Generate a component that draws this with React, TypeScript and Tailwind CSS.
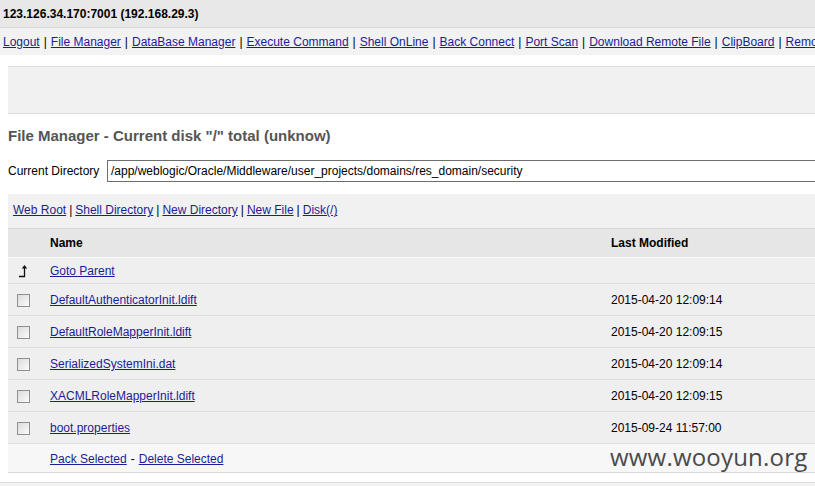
import React from "react";

const navLinks = [
  "Logout",
  "File Manager",
  "DataBase Manager",
  "Execute Command",
  "Shell OnLine",
  "Back Connect",
  "Port Scan",
  "Download Remote File",
  "ClipBoard",
  "Remote Control",
  "Port Map",
  "JSP Env",
  "Eval Java Code",
];

const toolLinks = ["Web Root", "Shell Directory", "New Directory", "New File", "Disk(/)"];

const files = [
  ["DefaultAuthenticatorInit.ldift", "2015-04-20 12:09:14"],
  ["DefaultRoleMapperInit.ldift", "2015-04-20 12:09:15"],
  ["SerializedSystemIni.dat", "2015-04-20 12:09:14"],
  ["XACMLRoleMapperInit.ldift", "2015-04-20 12:09:15"],
  ["boot.properties", "2015-09-24 11:57:00"],
];

function Box() {
  return (
    <span className="block w-[13px] h-[13px] border border-[#8f8f8f] bg-gradient-to-br from-[#dcdcdc] to-[#fafafa]" />
  );
}

export default function App() {
  return (
    <div
      className="w-full h-screen overflow-hidden bg-white text-[12px] text-black relative"
      style={{ fontFamily: '"Liberation Sans", Arial, sans-serif' }}
    >
      <div className="h-[28px] bg-[#e8e8e8] border-b border-[#d8d8d8] flex items-center px-[3px] font-bold whitespace-nowrap">
        123.126.34.170:7001 (192.168.29.3)
      </div>
      <div className="h-[27px] bg-[#f2f2f2] flex items-center px-[3px] whitespace-nowrap">
        {navLinks.map((l, i) => (
          <React.Fragment key={l}>
            {i > 0 && <span className="mx-[4px]">|</span>}
            <a className="text-[#1c1c96] underline" href="#">
              {l}
            </a>
          </React.Fragment>
        ))}
      </div>
      <div className="pl-[8px] pt-[11px]">
        <div className="h-[48px] bg-[#f1f1f1] border-t border-b border-[#dcdcdc]" />
        <div className="pt-[11px] h-[46px] text-[15px] font-bold text-[#555] whitespace-nowrap">
          File Manager - Current disk &quot;/&quot; total (unknow)
        </div>
        <div className="flex items-center h-[22px] whitespace-nowrap">
          <span className="w-[99px] shrink-0">Current Directory</span>
          <div className="w-[760px] shrink-0 h-[22px] border border-[#6e6e6e] flex items-center pl-[3px] bg-white">
            /app/weblogic/Oracle/Middleware/user_projects/domains/res_domain/security
          </div>
        </div>
        <div className="mt-[12px] h-[34px] bg-[#f1f1f1] flex items-start pt-[7px] px-[5px] whitespace-nowrap">
          {toolLinks.map((l, i) => (
            <React.Fragment key={l}>
              {i > 0 && <span className="mx-[3px]">|</span>}
              <a className="text-[#1c1c96] underline" href="#">
                {l}
              </a>
            </React.Fragment>
          ))}
        </div>
        <div className="w-[1100px]">
          <div className="h-[29px] bg-[#e6e6e6] border-t border-[#d6d6d6] flex items-center font-bold">
            <div className="w-[42px]" />
            <div className="w-[561px]">Name</div>
            <div>Last Modified</div>
          </div>
          <div className="h-[27px] bg-[#efefef] border-t border-[#fafafa] border-b border-b-[#dedede] flex items-center">
            <div className="w-[42px] pl-[10px]">
              <svg width="12" height="14" viewBox="0 0 12 14">
                <path d="M1 12.5 H6.5 V2.5" fill="none" stroke="#111" strokeWidth="1.3" />
                <path d="M6.5 1 L3.8 4.6 H9.2 Z" fill="#111" />
              </svg>
            </div>
            <a className="text-[#1c1c96] underline" href="#">
              Goto Parent
            </a>
          </div>
          {files.map(([n, d]) => (
            <div
              key={n}
              className="h-[32px] bg-[#efefef] border-b border-[#dedede] flex items-center pt-[1px]"
            >
              <div className="w-[42px] pl-[9px]">
                <Box />
              </div>
              <a className="w-[561px] text-[#1c1c96] underline" href="#">
                {n}
              </a>
              <div>{d}</div>
            </div>
          ))}
          <div className="h-[29px] bg-[#f7f7f7] border-b border-[#dadada] flex items-center pt-[1px]">
            <div className="w-[42px]" />
            <a className="text-[#1c1c96] underline" href="#">
              Pack Selected
            </a>
            <span className="mx-[4px]">-</span>
            <a className="text-[#1c1c96] underline" href="#">
              Delete Selected
            </a>
          </div>
        </div>
      </div>
      <div className="mt-[9px] h-[20px] bg-[#f2f2f2] border-t border-[#dcdcdc]" />
      <div
        className="absolute left-[610px] top-[439px] text-[24px] text-[#4a4a4a] tracking-[0.2px]"
        style={{ fontFamily: '"Open Sans", "Noto Sans", sans-serif' }}
      >
        www.wooyun.org
      </div>
    </div>
  );
}
